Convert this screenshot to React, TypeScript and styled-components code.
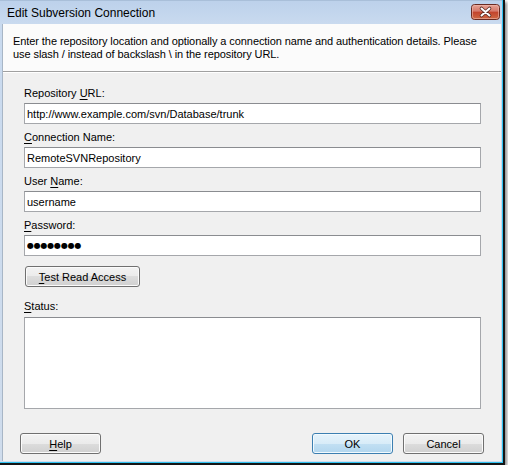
import styled, { createGlobalStyle } from 'styled-components';

const UI_FONT = `'Liberation Sans', Arial, sans-serif`;

const GlobalStyle = createGlobalStyle`
  body {
    margin: 0;
    background: #ffffff;
  }
`;

const Window = styled.div`
  width: 505px;
  height: 465px;
  box-sizing: border-box;
  border-right: 2px solid #151515;
  border-bottom: 2px solid #151515;
  box-shadow: 2px 2px 3px rgba(0, 0, 0, 0.45);
  font-family: ${UI_FONT};
  font-size: 11px;
  color: #000;
`;

const Frame = styled.div`
  height: 100%;
  box-sizing: border-box;
  display: flex;
  flex-direction: column;
  border-right: 1px solid #2fc2f1;
  border-bottom: 1px solid #2fc2f1;
  background: linear-gradient(#bcd1eb 0px, #c9daef 24px, #cfdcec 100%);
`;

const TitleBar = styled.div`
  height: 24px;
  flex: none;
  display: flex;
  align-items: flex-start;
  justify-content: space-between;
  padding: 0 2px 0 7px;
  border-top: 1px solid #a9bfd9;
  box-sizing: border-box;
`;

const Title = styled.span`
  font-size: 12px;
  line-height: 23px;
  padding-top: 1px;
  color: #000;
`;

const CloseButton = styled.div`
  margin-top: 3px;
  width: 29px;
  height: 16px;
  display: flex;
`;

const Client = styled.div`
  flex: 1;
  margin: 0 1px 1px 2px;
  background: #f0f0f0;
  display: flex;
  flex-direction: column;
  border-left: 1px solid #a8b6c6;
`;

const Header = styled.div`
  height: 48px;
  flex: none;
  box-sizing: border-box;
  padding: 11px 10px 0 10px;
  background: #fbfbfb;
  border-bottom: 1px solid #a0a0a0;
  box-shadow: 0 1px 0 #ffffff;
  line-height: 13px;
  letter-spacing: -0.08px;
`;

const Form = styled.div`
  display: flex;
  flex-direction: column;
  padding: 14px 20px 0 21px;
`;

const Group = styled.div`
  display: flex;
  flex-direction: column;
  margin-bottom: 6px;
`;

const Label = styled.label<{ $top?: number; $gap?: number }>`
  line-height: 15px;
  margin-top: ${(p) => p.$top ?? 0}px;
  margin-bottom: ${(p) => p.$gap ?? 2}px;
  cursor: default;
`;

const Key = styled.span`
  text-decoration: underline;
  text-underline-offset: 2px;
`;

const TextField = styled.input<{ $masked?: boolean }>`
  height: 21px;
  box-sizing: border-box;
  margin: 0;
  padding: 0 2px;
  border: 1px solid #a5a7ab;
  border-top-color: #8a8c90;
  background: #ffffff;
  font-family: ${(p) => (p.$masked ? `'DejaVu Sans', sans-serif` : UI_FONT)};
  font-size: ${(p) => (p.$masked ? '8px' : '11px')};
  letter-spacing: ${(p) => (p.$masked ? '-0.2px' : '0')};
  color: #000;
  outline: none;
`;

const StatusBox = styled.textarea`
  height: 92px;
  box-sizing: border-box;
  margin: 0;
  border: 1px solid #a5a7ab;
  border-top-color: #8a8c90;
  background: #ffffff;
  resize: none;
  outline: none;
`;

const Button = styled.button<{ $default?: boolean; $width?: number }>`
  width: ${(p) => p.$width ?? 81}px;
  height: 21px;
  box-sizing: border-box;
  margin: 0;
  padding: 0;
  border: 1px solid ${(p) => (p.$default ? '#3c7fb1' : '#707070')};
  border-radius: 3px;
  background: ${(p) =>
    p.$default
      ? 'linear-gradient(#e6f3fb 0%, #d8ecf8 50%, #c2e0f3 50%, #b2d6ee 100%)'
      : 'linear-gradient(#f3f3f3 0%, #ebebeb 50%, #dddddd 50%, #d0d0d0 100%)'};
  box-shadow: inset 0 0 0 1px ${(p) => (p.$default ? '#f2fafe' : '#fbfbfb')};
  font-family: ${UI_FONT};
  font-size: 11px;
  color: #000;
  cursor: default;
`;

const TestButton = styled(Button)`
  margin: 4px 0 0 1px;
`;

const Footer = styled.div`
  margin-top: auto;
  display: flex;
  justify-content: space-between;
  padding: 0 17px 7px 17px;
`;

const ButtonGroup = styled.div`
  display: flex;
  gap: 10px;
`;

function CloseGlyph() {
  return (
    <svg width="29" height="16" viewBox="0 0 29 16">
      <defs>
        <linearGradient id="closeBg" x1="0" y1="0" x2="0" y2="1">
          <stop offset="0" stopColor="#e8a596" />
          <stop offset="0.45" stopColor="#d5786a" />
          <stop offset="0.5" stopColor="#c2432c" />
          <stop offset="1" stopColor="#cf6a44" />
        </linearGradient>
      </defs>
      <rect x="0.5" y="0.5" width="28" height="15" rx="3" fill="url(#closeBg)" stroke="#6a2a20" />
      <rect x="1.5" y="1.5" width="26" height="13" rx="2" fill="none" stroke="#eeb9ad" strokeOpacity="0.6" />
      <path d="M10.5 4.5 L18.5 11.5 M18.5 4.5 L10.5 11.5" stroke="#5a2a22" strokeWidth="3.6" strokeLinecap="round" />
      <path d="M10.5 4.5 L18.5 11.5 M18.5 4.5 L10.5 11.5" stroke="#ffffff" strokeWidth="2" strokeLinecap="round" />
    </svg>
  );
}

export default function App() {
  return (
    <>
      <GlobalStyle />
      <Window>
        <Frame>
          <TitleBar>
            <Title>Edit Subversion Connection</Title>
            <CloseButton>
              <CloseGlyph />
            </CloseButton>
          </TitleBar>
          <Client>
            <Header>
              Enter the repository location and optionally a connection name and authentication details. Please
              use slash / instead of backslash \ in the repository URL.
            </Header>
            <Form>
              <Group>
                <Label>
                  Repository <Key>U</Key>RL:
                </Label>
                <TextField readOnly value="http://www.example.com/svn/Database/trunk" />
              </Group>
              <Group>
                <Label>
                  <Key>C</Key>onnection Name:
                </Label>
                <TextField readOnly value="RemoteSVNRepository" />
              </Group>
              <Group>
                <Label>
                  User <Key>N</Key>ame:
                </Label>
                <TextField readOnly value="username" />
              </Group>
              <Group>
                <Label>
                  <Key>P</Key>assword:
                </Label>
                <TextField readOnly $masked value="●●●●●●●●" />
              </Group>
              <TestButton $width={115}>
                <Key>T</Key>est Read Access
              </TestButton>
              <Label $top={12} $gap={3}>
                <Key>S</Key>tatus:
              </Label>
              <StatusBox readOnly />
            </Form>
            <Footer>
              <Button>
                <Key>H</Key>elp
              </Button>
              <ButtonGroup>
                <Button $default>OK</Button>
                <Button>Cancel</Button>
              </ButtonGroup>
            </Footer>
          </Client>
        </Frame>
      </Window>
    </>
  );
}
